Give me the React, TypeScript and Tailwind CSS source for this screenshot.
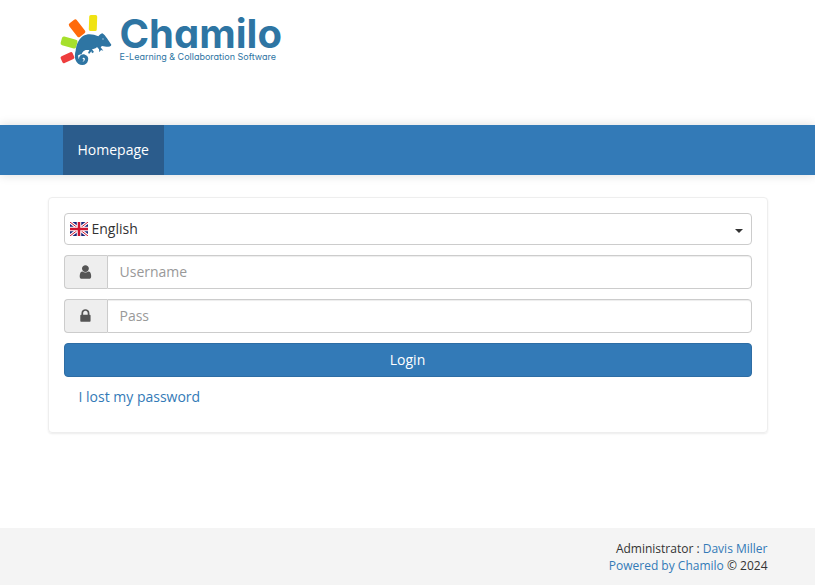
import { useState } from "react";

function ChameleonMark() {
  return (
    <svg viewBox="30 27 156 156" className="size-[52px] shrink-0" aria-hidden="true">
      <rect x="117" y="30" width="24" height="48" rx="5" fill="#f0e313" transform="rotate(2 129 54)" />
      <rect x="67" y="44" width="29" height="51" rx="6" fill="#ff6a0a" transform="rotate(-38 82 70)" />
      <rect x="33" y="99" width="48" height="27" rx="6" fill="#a6e02c" transform="rotate(15 57 113)" />
      <rect x="33" y="147" width="39" height="22" rx="5" fill="#ee3d3d" transform="rotate(-25 52 158)" />
      <path
        fill="#2e75a3"
        d="M77 153C75 126 84 103 99 93C113 84 130 87 145 94C149 90 151 86 157 85C163 88 166 93 171 100L184 119C184 124 177 125 169 125L156 123L152 127L160 137L153 135L148 142L147 133L141 126C138 130 131 132 126 133L132 141L126 145L124 139L118 146L114 144L118 135L107 135C101 137 97 142 95 147Z"
      />
      <path
        d="M83 139C75 156 82 175 97 175C110 175 115 157 102 153C93 152 88 162 96 165"
        fill="none"
        stroke="#2e75a3"
        strokeWidth="10"
        strokeLinecap="round"
      />
      <circle cx="159" cy="102" r="2" fill="#b9d3e4" />
    </svg>
  );
}

function Logo() {
  return (
    <a href="#" className="flex w-fit items-start gap-2 pt-[14px] pl-3 font-['Inter',sans-serif] text-[#2e75a3]">
      <ChameleonMark />
      <span className="flex flex-col whitespace-nowrap">
        <span className="text-[40px] leading-[40px] font-bold [font-feature-settings:'cv11']">Chamilo</span>
        <span className="text-[9px] leading-[6px] [font-feature-settings:'cv11']">
          E-Learning &amp; Collaboration Software
        </span>
      </span>
    </a>
  );
}

function UnionFlag() {
  return (
    <svg viewBox="0 0 36 28" className="pointer-events-none absolute top-[9px] left-[6px] h-[14px] w-[18px]" aria-hidden="true">
      <path fill="#17247a" d="M0 0h36v28H0z" />
      <path stroke="#fff" strokeWidth="6" d="M0 0l36 28M36 0L0 28" />
      <path stroke="#cf1430" strokeWidth="2" d="M0 0l36 28M36 0L0 28" />
      <path stroke="#fff" strokeWidth="9" d="M18 0v28M0 14h36" />
      <path stroke="#cf1430" strokeWidth="5" d="M18 0v28M0 14h36" />
    </svg>
  );
}

const userPath =
  "M1536 1399q0 109-62.5 187t-150.5 78h-854q-88 0-150.5-78t-62.5-187q0-85 8.5-160.5t31.5-152 58.5-131 94-89 134.5-34.5q131 128 313 128t313-128q76 0 134.5 34.5t94 89 58.5 131 31.5 152 8.5 160.5zm-256-887q0 159-112.5 271.5t-271.5 112.5-271.5-112.5-112.5-271.5 112.5-271.5 271.5-112.5 271.5 112.5 112.5 271.5z";
const lockPath =
  "M640 768h512v-192q0-106-75-181t-181-75-181 75-75 181v192zm832 96v576q0 40-28 68t-68 28h-960q-40 0-68-28t-28-68v-576q0-40 28-68t68-28h32v-192q0-184 132-316t316-132 316 132 132 316v192h32q40 0 68 28t28 68z";

type FieldProps = {
  id: string;
  type: string;
  label: string;
  icon: string;
  value: string;
  onChange: (value: string) => void;
};

function Field({ id, type, label, icon, value, onChange }: FieldProps) {
  return (
    <div className="flex h-[34px]">
      <label
        htmlFor={id}
        aria-label={label}
        className="flex w-[43px] items-center justify-center rounded-l border border-r-0 border-[#ccc] bg-[#eee] text-[#555]"
      >
        <svg viewBox="64 0 1792 1792" className="size-4" fill="currentColor" aria-hidden="true">
          <path d={icon} />
        </svg>
      </label>
      <input
        id={id}
        type={type}
        placeholder={label}
        value={value}
        onChange={(event) => onChange(event.target.value)}
        className="min-w-0 flex-1 rounded-r border border-[#ccc] bg-white px-3 text-[#555] shadow-[inset_0_1px_1px_rgba(0,0,0,0.075)] outline-none placeholder:text-[#999] focus:border-[#66afe9]"
      />
    </div>
  );
}

export default function App() {
  const [username, setUsername] = useState("");
  const [password, setPassword] = useState("");

  return (
    <div className="flex min-h-screen flex-col bg-white font-['Open_Sans',sans-serif] text-sm text-[#333]">
      <header className="h-[125px]">
        <div className="mx-auto max-w-[750px] px-[15px]">
          <Logo />
        </div>
      </header>

      <nav className="bg-[#337ab7] shadow-[0_0_10px_rgba(0,0,0,0.14)]">
        <div className="mx-auto flex max-w-[750px] px-[30px]">
          <a href="#" className="bg-[#2b5c8c] p-[15px] leading-5 text-white">
            Homepage
          </a>
        </div>
      </nav>

      <main className="mx-auto w-full max-w-[750px] px-[15px] pt-[22px] pb-5">
        <form
          className="flex flex-col gap-[10px] rounded border border-[#eee] p-[15px] pb-[25px] shadow-[0_1px_2px_rgba(0,0,0,0.08)]"
          onSubmit={(event) => event.preventDefault()}
        >
          <div className="relative">
            <UnionFlag />
            <select
              aria-label="Language"
              className="block h-8 w-full appearance-none rounded border border-[#ccc] bg-white pr-6 pl-[27px] text-[#333] outline-none"
            >
              <option>English</option>
            </select>
            <span className="pointer-events-none absolute top-4 right-[9px] border-x-4 border-t-4 border-x-transparent border-t-[#333]" />
          </div>
          <Field id="login" type="text" label="Username" icon={userPath} value={username} onChange={setUsername} />
          <Field id="password" type="password" label="Pass" icon={lockPath} value={password} onChange={setPassword} />
          <button type="submit" className="h-[34px] rounded border border-[#2e6da4] bg-[#337ab7] text-white">
            Login
          </button>
          <a href="#" className="w-fit pl-[15px] leading-5 text-[#337ab7]">
            I lost my password
          </a>
        </form>
      </main>

      <footer className="mt-auto bg-[#f4f4f4] pt-3 pb-[11px]">
        <div className="mx-auto max-w-[750px] px-[15px] text-right text-xs leading-[17px]">
          <p>
            Administrator :{" "}
            <a href="#" className="text-[#337ab7]">
              Davis Miller
            </a>
          </p>
          <p>
            <a href="#" className="text-[#337ab7]">
              Powered by Chamilo
            </a>{" "}
            © 2024
          </p>
        </div>
      </footer>
    </div>
  );
}
